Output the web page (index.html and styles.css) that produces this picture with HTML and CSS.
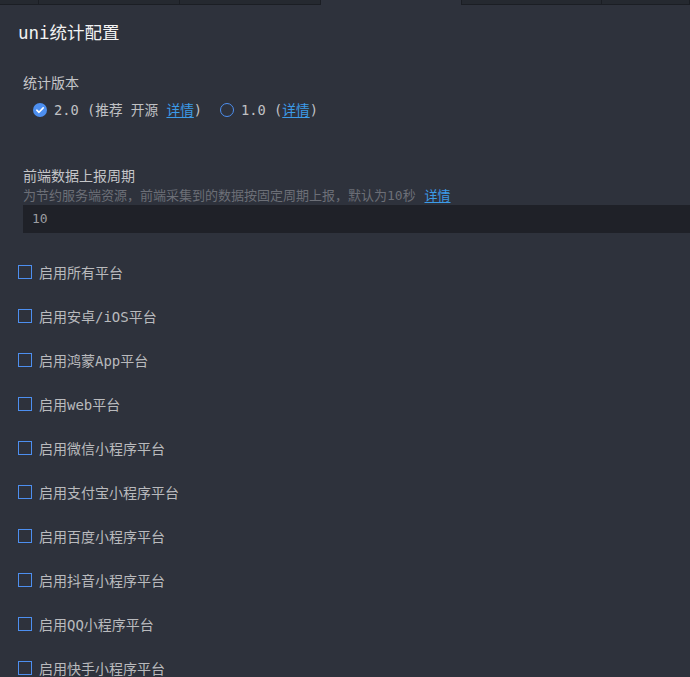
FILE: index.html
```html
<!DOCTYPE html>
<html lang="zh-CN">
<head>
  <meta charset="utf-8" />
  <meta name="viewport" content="width=device-width, initial-scale=1.0" />
  <title>uni统计配置</title>
  <link rel="stylesheet" href="styles.css">
</head>
<body>
  <div class="tabs">
    <div class="tab" style="width:39px"></div>
    <div class="tab" style="width:141px"></div>
    <div class="tab" style="width:141px"></div>
    <div class="tab active" style="width:142px"></div>
    <div class="tab" style="width:140px"></div>
    <div class="tab" style="width:88px"></div>
  </div>

  <h1 class="title">uni统计配置</h1>

  <div class="section">
    <div class="label">统计版本</div>
    <div class="radios">
      <label class="radio">
        <span class="dot checked">
          <svg width="14" height="14" viewBox="0 0 14 14"><circle cx="7" cy="7" r="7" fill="#4d8ff0"/><path d="M3.8 7.2 L6 9.3 L10.2 4.9" fill="none" stroke="#fff" stroke-width="1.6" stroke-linecap="round" stroke-linejoin="round"/></svg>
        </span>
        <span>2.0 (推荐 开源 <a href="#">详情</a>)</span>
      </label>
      <label class="radio">
        <span class="dot"></span>
        <span>1.0 (<a href="#">详情</a>)</span>
      </label>
    </div>
  </div>

  <div class="section period">
    <div class="label">前端数据上报周期</div>
    <div class="hint">为节约服务端资源，前端采集到的数据按固定周期上报，默认为10秒 <a href="#">详情</a></div>
    <div class="input">10</div>
  </div>

  <div class="platforms">
    <label class="check"><span class="box"></span>启用所有平台</label>
    <label class="check"><span class="box"></span>启用安卓/iOS平台</label>
    <label class="check"><span class="box"></span>启用鸿蒙App平台</label>
    <label class="check"><span class="box"></span>启用web平台</label>
    <label class="check"><span class="box"></span>启用微信小程序平台</label>
    <label class="check"><span class="box"></span>启用支付宝小程序平台</label>
    <label class="check"><span class="box"></span>启用百度小程序平台</label>
    <label class="check"><span class="box"></span>启用抖音小程序平台</label>
    <label class="check"><span class="box"></span>启用QQ小程序平台</label>
    <label class="check"><span class="box"></span>启用快手小程序平台</label>
  </div>
</body>
</html>
```

FILE: styles.css
```css
body {
  margin: 0;
  background: #2e323c;
  font-family: "DejaVu Sans Mono", "Noto Sans CJK SC", monospace;
  color: #c4c5c8;
  overflow: hidden;
}

a {
  color: #3c9be8;
  text-decoration: underline;
  text-underline-offset: 2px;
}

.tabs {
  display: flex;
  height: 5px;
}

.tab {
  box-sizing: border-box;
  background: #252930;
  border-right: 1px solid #1b1e24;
  border-bottom: 1px solid #1b1e24;
}

.tab.active {
  background: transparent;
  border-bottom: none;
}

.title {
  margin: 17px 0 0 18px;
  font-size: 17.5px;
  line-height: 22px;
  font-weight: normal;
  color: #f2f2f2;
}

.section {
  padding-left: 23px;
  margin-top: 29px;
}

.label {
  font-size: 14px;
  line-height: 20px;
  color: #c4c5c8;
}

.radios {
  display: flex;
  gap: 18px;
  margin-top: 7px;
  padding-left: 10px;
  font-size: 13.7px;
  line-height: 20px;
  color: #c0c1c4;
}

.radio {
  display: flex;
  align-items: center;
  gap: 7px;
}

.dot {
  box-sizing: border-box;
  width: 14px;
  height: 14px;
  border: 1.5px solid #4d8ff0;
  border-radius: 50%;
}

.dot.checked {
  border: none;
  display: flex;
}

.period {
  margin-top: 46px;
}

.hint {
  font-size: 13px;
  line-height: 19px;
  color: #6c6f77;
}

.hint a {
  margin-left: 1px;
}

.input {
  height: 28px;
  background: #1f2128;
  padding-left: 9px;
  font-size: 13px;
  line-height: 28px;
  color: #9c9da1;
}

.platforms {
  margin-top: 17px;
  padding-left: 18px;
}

.check {
  display: flex;
  align-items: center;
  height: 44px;
  font-size: 14px;
  color: #b9babd;
}

.box {
  box-sizing: border-box;
  width: 14px;
  height: 14px;
  border: 1.5px solid #4d8ff0;
  margin-right: 7px;
}
```
